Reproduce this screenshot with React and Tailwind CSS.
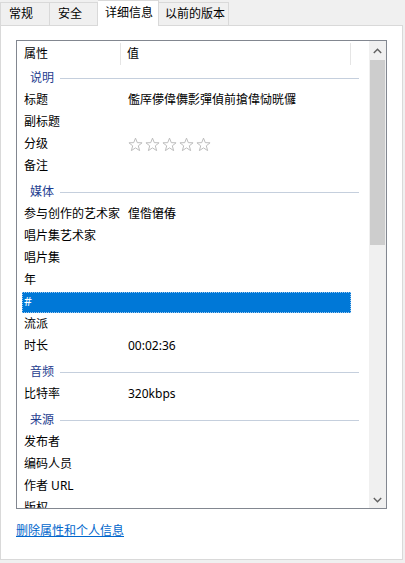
import React from 'react';

const FONT = { fontFamily: '"Noto Sans", "Noto Sans CJK SC", sans-serif' };

const rows = [
  { group: '说明', first: true },
  { label: '标题', value: '儖厗儚偉儛彯彈偵前搶偉恸晄儸' },
  { label: '副标题' },
  { label: '分级', stars: true },
  { label: '备注' },
  { group: '媒体' },
  { label: '参与创作的艺术家', value: '偟偺僒偆' },
  { label: '唱片集艺术家' },
  { label: '唱片集' },
  { label: '年' },
  { label: '#', selected: true },
  { label: '流派' },
  { label: '时长', value: '00:02:36' },
  { group: '音频' },
  { label: '比特率', value: '320kbps' },
  { group: '来源' },
  { label: '发布者' },
  { label: '编码人员' },
  { label: '作者 URL' },
  { label: '版权' },
];

function Star() {
  return (
    <svg width="15" height="15" viewBox="0 0 16 16">
      <path
        d="M8 1.2 L9.9 6 L15 6.2 L11 9.4 L12.4 14.5 L8 11.6 L3.6 14.5 L5 9.4 L1 6.2 L6.1 6 Z"
        fill="none"
        stroke="#b9b9b9"
        strokeWidth="1"
        strokeLinejoin="round"
      />
    </svg>
  );
}

function Chevron({ down }) {
  return (
    <svg width="9" height="6" viewBox="0 0 9 6" className={down ? 'rotate-180' : ''}>
      <path d="M0.8 5 L4.5 1.3 L8.2 5" fill="none" stroke="#606060" strokeWidth="1.4" />
    </svg>
  );
}

function Row({ row }) {
  if (row.group) {
    return (
      <div className={`flex items-center pl-[13px] pr-[10px] ${row.first ? 'h-[22px]' : 'h-[26px] pt-[4px]'}`}>
        <span className="text-[#1e3d8f] leading-[22px]">{row.group}</span>
        <div className="flex-1 h-px bg-[#c5cfdd] ml-[6px]" />
      </div>
    );
  }
  if (row.selected) {
    return (
      <div className="h-[22px] flex items-center">
        <div className="ml-[5px] w-[329px] h-[21px] bg-[#0078d7] border border-dotted border-[#9cc7ee] text-white flex items-center pl-[1px] leading-[22px]">
          {row.label}
        </div>
      </div>
    );
  }
  return (
    <div className="h-[22px] flex items-center text-black leading-[22px]">
      <div className="w-[111px] pl-[7px] shrink-0 whitespace-nowrap">{row.label}</div>
      {row.stars ? (
        <div className="flex gap-[2px]">
          <Star /><Star /><Star /><Star /><Star />
        </div>
      ) : (
        <div className="whitespace-nowrap">{row.value}</div>
      )}
    </div>
  );
}

export default function App() {
  const tabs = [
    { name: '常规', w: 'w-[50px] pl-[8px]' },
    { name: '安全', w: 'w-[48px] pl-[8px]' },
    { name: '详细信息', w: 'w-[61px] pl-[7px]', active: true },
    { name: '以前的版本', w: 'w-[70px] pl-[6px]' },
  ];

  return (
    <div className="w-[405px] h-[563px] bg-[#f0f0f0] overflow-hidden text-[12px]" style={FONT}>
      {/* Tabs */}
      <div className="h-[25px] flex items-end">
        {tabs.map((t, i) => (
          <div
            key={t.name}
            className={`${t.w} flex items-center border-t border-r border-[#d9d9d9] ${i === 0 ? 'border-l' : ''} ${
              t.active ? 'h-[26px] bg-white -mb-px relative z-10' : 'h-[23px] bg-[#f0f0f0]'
            }`}
          >
            <span className={t.active ? 'pb-[2px]' : ''}>{t.name}</span>
          </div>
        ))}
      </div>

      {/* Panel */}
      <div className="w-[403px] h-[535px] bg-white border border-[#d9d9d9] pt-[14px] pl-[15px]">
        <div className="w-[371px] h-[469px] border border-[#828790] flex overflow-hidden">
          <div className="flex-1 overflow-hidden">
            {/* Header */}
            <div className="h-[26px] flex text-black">
              <div className="w-[104px] pl-[7px] leading-[26px] border-r border-[#e5e5e5] my-[2px] flex items-center">属性</div>
              <div className="w-[230px] pl-[6px] border-r border-[#e5e5e5] my-[2px] flex items-center">值</div>
            </div>
            {rows.map((r, i) => (
              <Row key={i} row={r} />
            ))}
          </div>
          {/* Scrollbar */}
          <div className="w-[17px] bg-[#f0f0f0] flex flex-col">
            <div className="h-[19px] flex items-center justify-center">
              <Chevron />
            </div>
            <div className="h-[185px] bg-[#cdcdcd] mx-px" />
            <div className="flex-1" />
            <div className="h-[17px] flex items-center justify-center">
              <Chevron down />
            </div>
          </div>
        </div>

        <div className="mt-[14px] leading-[16px]">
          <span className="text-[#0066cc] underline">删除属性和个人信息</span>
        </div>
      </div>
    </div>
  );
}
